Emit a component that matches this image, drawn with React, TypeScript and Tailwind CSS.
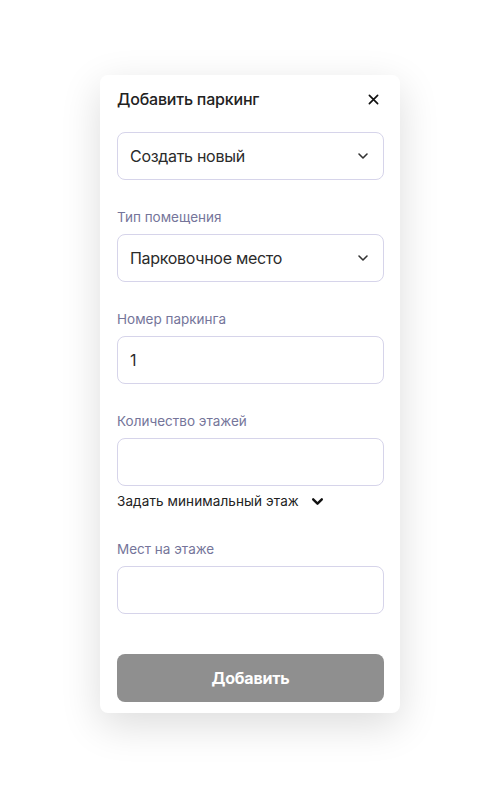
import React from 'react';

const font = { fontFamily: 'Inter, "Noto Sans", sans-serif' };

function Chevron({ className }: { className?: string }) {
  return (
    <svg className={className} viewBox="0 0 12 8" fill="none" stroke="currentColor" strokeWidth="1.6" strokeLinecap="round" strokeLinejoin="round">
      <path d="M2 2l4 4 4-4" />
    </svg>
  );
}

function Label({ children }: { children: React.ReactNode }) {
  return <p className="text-[13.5px] leading-[18px] text-[#75759a] mb-2">{children}</p>;
}

function SelectBox({ value }: { value: string }) {
  return (
    <div className="h-12 rounded-lg border border-[#d6d4ea] flex items-center justify-between pl-[12px] pr-[14px]">
      <span className="text-[16px] text-[#2b2b2b] tracking-[-0.3px]">{value}</span>
      <Chevron className="w-[12px] h-[8px] text-[#333]" />
    </div>
  );
}

function InputBox({ value }: { value?: string }) {
  return (
    <div className="h-12 rounded-lg border border-[#d6d4ea] flex items-center px-[12px]">
      <span className="text-[16px] text-[#2b2b2b]">{value}</span>
    </div>
  );
}

export default function App() {
  return (
    <div className="min-h-[788px] bg-white flex justify-center pt-[75px]" style={font}>
      <div className="w-[300px] h-[638px] bg-white rounded-lg shadow-[0_12px_40px_rgba(0,0,0,0.14)] pl-[17px] pr-[16px] pt-[13px] flex flex-col">
        {/* Header */}
        <div className="flex items-center justify-between h-[22px]">
          <h2 className="text-[16px] font-medium text-[#222] tracking-[-0.2px]">Добавить паркинг</h2>
          <svg className="w-[11px] h-[11px] mr-[5px]" viewBox="0 0 12 12" stroke="#111" strokeWidth="1.8" strokeLinecap="round">
            <path d="M1.5 1.5l9 9M10.5 1.5l-9 9" />
          </svg>
        </div>

        <div className="mt-[22px]">
          <SelectBox value="Создать новый" />
        </div>

        <div className="mt-[28px]">
          <Label>Тип помещения</Label>
          <SelectBox value="Парковочное место" />
        </div>

        <div className="mt-[28px]">
          <Label>Номер паркинга</Label>
          <InputBox value="1" />
        </div>

        <div className="mt-[28px]">
          <Label>Количество этажей</Label>
          <InputBox />
          <div className="flex items-center gap-[12px] mt-[6px] h-[18px]">
            <span className="text-[13.5px] text-[#222] tracking-[0.1px]">Задать минимальный этаж</span>
            <Chevron className="w-[13px] h-[9px] text-[#111] [&_path]:stroke-[2.2]" />
          </div>
        </div>

        <div className="mt-[30px]">
          <Label>Мест на этаже</Label>
          <InputBox />
        </div>

        <button className="mt-[40px] h-12 rounded-lg bg-[#8f8f8f] text-white text-[16px] font-bold tracking-[-0.2px]">
          Добавить
        </button>
      </div>
    </div>
  );
}
